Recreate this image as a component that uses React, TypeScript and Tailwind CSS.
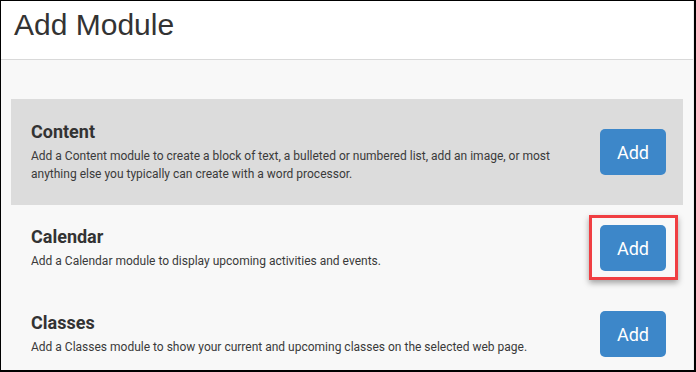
import React from 'react'

type Module = { name: string; description: string; highlight?: boolean; active?: boolean }

const modules: Module[] = [
    {
        name: 'Content',
        description:
            'Add a Content module to create a block of text, a bulleted or numbered list, add an image, or most anything else you typically can create with a word processor.',
        active: true,
    },
    {
        name: 'Calendar',
        description: 'Add a Calendar module to display upcoming activities and events.',
        highlight: true,
    },
    {
        name: 'Classes',
        description: 'Add a Classes module to show your current and upcoming classes on the selected web page.',
    },
]

const AddButton = () => (
    <button className="w-[66px] h-[46px] rounded-[5px] bg-[#3d87c9] text-white text-[18px] font-['Roboto',sans-serif]">
        Add
    </button>
)

const ModuleRow = ({ module }: { module: Module }) => {
    return (
        <div
            className={`flex items-center justify-between pl-5 pr-[17px] ${
                module.active ? 'bg-[#dcdcdc] h-[106px]' : 'h-[86px]'
            }`}
        >
            <div className="w-[530px] font-['Roboto',sans-serif] text-[#333]">
                <h2 className="text-[18px] leading-[22px] font-bold">{module.name}</h2>
                <p className="mt-1 text-[12px] leading-[18px] text-[#3a3a3a]">{module.description}</p>
            </div>
            {module.highlight ? (
                <div className="relative">
                    <AddButton />
                    <span className="absolute -left-[11px] -right-[12px] -top-[10px] -bottom-[9px] border-[3px] border-[#f03e42] shadow-[0_3px_6px_rgba(0,0,0,0.35)]" />
                </div>
            ) : (
                <AddButton />
            )}
        </div>
    )
}

const App = () => {
    return (
        <div className="w-[696px] h-[372px] overflow-hidden bg-black pt-px pl-px pr-[2px] pb-[2px]">
            <div className="h-full bg-[#f8f8f8] border-r border-[#ececec] overflow-hidden">
                <div className="h-[59px] bg-white border-b border-[#d9d9d9] pl-[13px] pt-[6px]">
                    <h1 className="text-[30px] leading-[36px] text-[#333] font-['Liberation_Sans',Arial,sans-serif]">
                        Add Module
                    </h1>
                </div>
                <div className="pt-[39px] px-[10px]">
                    {modules.map((m) => (
                        <ModuleRow key={m.name} module={m} />
                    ))}
                </div>
            </div>
        </div>
    )
}

export default App
